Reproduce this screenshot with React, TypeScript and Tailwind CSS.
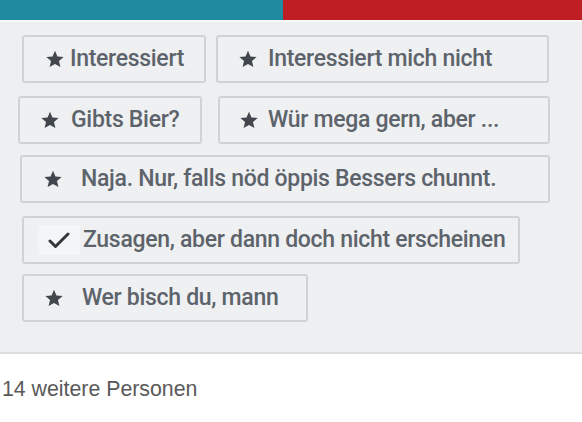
import React from "react";

type Choice = {
  label: string;
  width: string;
  pad: string;
  gap: string;
  icon: "star" | "check";
};

const rows: { className: string; items: Choice[] }[] = [
  {
    className: "ml-[22px] gap-[10px]",
    items: [
      { label: "Interessiert", width: "w-[184px]", pad: "pl-[22px]", gap: "gap-[6px]", icon: "star" },
      { label: "Interessiert mich nicht", width: "w-[333px]", pad: "pl-[21px]", gap: "gap-[11px]", icon: "star" },
    ],
  },
  {
    className: "mt-[13px] ml-[18px] gap-[16px]",
    items: [
      { label: "Gibts Bier?", width: "w-[184px]", pad: "pl-[21px]", gap: "gap-[12px]", icon: "star" },
      { label: "Wür mega gern, aber ...", width: "w-[332px]", pad: "pl-[20px]", gap: "gap-[10px]", icon: "star" },
    ],
  },
  {
    className: "mt-[11px] ml-[20px]",
    items: [
      { label: "Naja. Nur, falls nöd öppis Bessers chunnt.", width: "w-[530px]", pad: "pl-[22px]", gap: "gap-[19px]", icon: "star" },
    ],
  },
  {
    className: "mt-[13px] ml-[22px]",
    items: [
      { label: "Zusagen, aber dann doch nicht erscheinen", width: "w-[498px]", pad: "pl-[24px]", gap: "gap-[7px]", icon: "check" },
    ],
  },
  {
    className: "mt-[10px] ml-[22px]",
    items: [
      { label: "Wer bisch du, mann", width: "w-[286px]", pad: "pl-[21px]", gap: "gap-[19px]", icon: "star" },
    ],
  },
];

const Star = () => (
  <svg width="18" height="18" viewBox="0 0 24 24" className="shrink-0 fill-[#42474e]">
    <path d="M12 1l3.3 7.5 8.2.8-6.2 5.4 1.9 8.1L12 18.6l-7.2 4.2 1.9-8.1L.5 9.3l8.2-.8z" />
  </svg>
);

const Check = () => (
  <svg width="22" height="19" viewBox="0 0 22 19" className="shrink-0">
    <path d="M2 10l5.5 5.5L20 3" fill="none" stroke="#33373d" strokeWidth="3" strokeLinecap="round" strokeLinejoin="round" />
  </svg>
);

const ChoiceButton = ({ c }: { c: Choice }) => (
  <button
    className={`flex h-[48px] items-center rounded-[3px] border-2 border-[#d0d2d5] bg-[#eff0f2] ${c.width} ${c.pad} ${c.gap}`}
  >
    {c.icon === "star" ? (
      <Star />
    ) : (
      <span className="-ml-[10px] -mr-[4px] flex h-[30px] items-center bg-[#f4f5f6] px-[10px]">
        <Check />
      </span>
    )}
    <span className="whitespace-nowrap font-['Roboto',sans-serif] text-[23px] font-medium tracking-[-0.3px] text-[#5d636b]">
      {c.label}
    </span>
  </button>
);

export default function App() {
  return (
    <div className="h-[422px] w-[582px] overflow-hidden bg-white">
      <div className="flex h-[20px]">
        <div className="w-[283px] bg-[#1f8ba1]" />
        <div className="flex-1 bg-[#c01e25]" />
      </div>
      <div className="h-[2px] bg-[#f7f8f9]" />
      <div className="border-b-2 border-[#dcdde0] bg-[#eeeff1] pt-[13px] pb-[30px]">
        {rows.map((row, i) => (
          <div key={i} className={`flex ${row.className}`}>
            {row.items.map((c) => (
              <ChoiceButton key={c.label} c={c} />
            ))}
          </div>
        ))}
      </div>
      <div className="pl-[2px] pt-[23px] font-['Liberation_Sans',Arial,sans-serif] text-[21.3px] leading-[24px] text-[#595959]">
        14 weitere Personen
      </div>
    </div>
  );
}
